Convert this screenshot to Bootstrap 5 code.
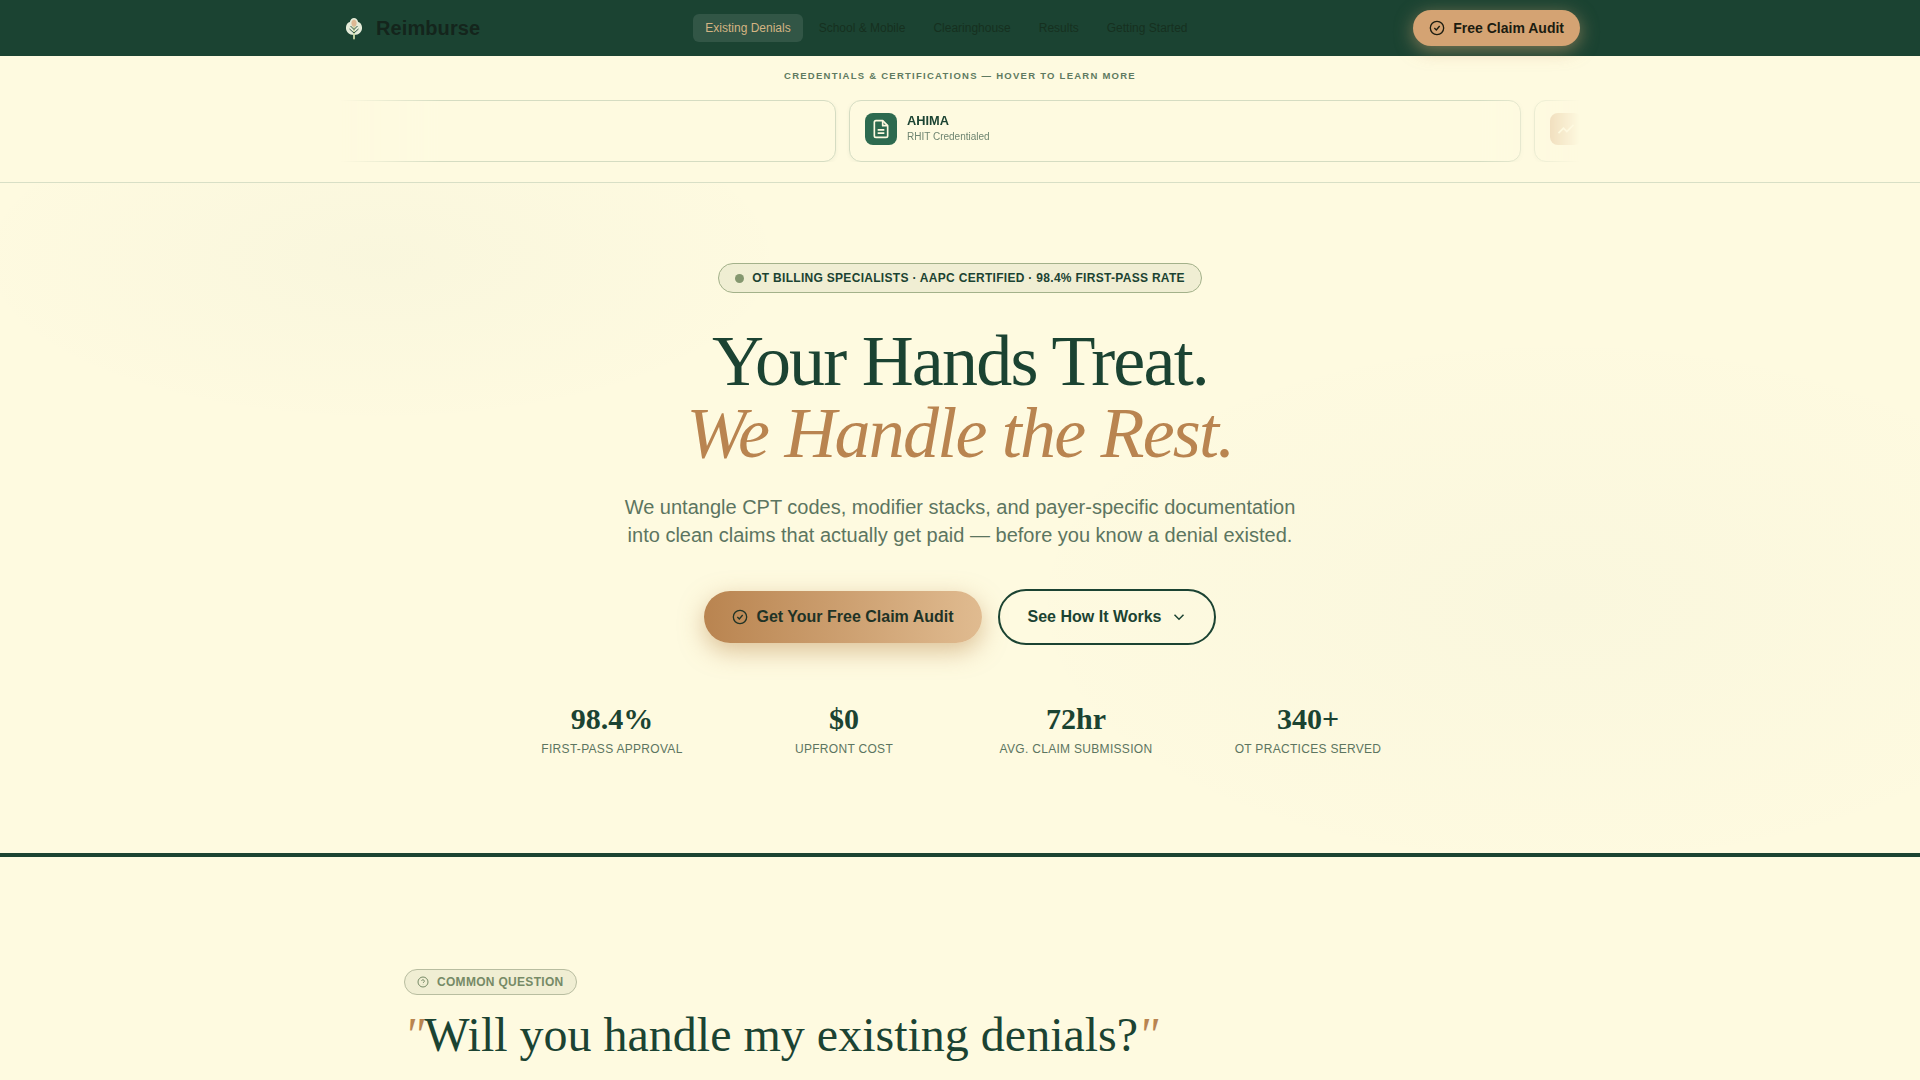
<!DOCTYPE html>
<html lang="en">
<head>
    <meta charset="UTF-8">
    <meta name="viewport" content="width=device-width, initial-scale=1.0">
    <title>Reimburse</title>
    <link href="https://cdn.jsdelivr.net/npm/bootstrap@5.3.0/dist/css/bootstrap.min.css" rel="stylesheet">
    <style>
        html, body { height: 1080px; overflow: hidden; }
        body { background: #fefae0; color: #1b4332; font-family: "Liberation Sans", Arial, sans-serif; }
        .serif { font-family: "Liberation Serif", "Times New Roman", serif; }

        /* nav */
        .top-bar { height: 56px; background: #1b4332; position: relative; z-index: 2; }
        .bar-inner { width: 1240px; margin: 0 auto; height: 100%; }
        .brand-name { color: #14251c; font-size: 20px; font-weight: 700; letter-spacing: .1px; margin-left: 10px; }
        .brand-mark { width: 24px; height: 24px; margin-left: 2px; }
        .nav-items { margin-left: 213px; gap: 4px; }
        .nav-item-link { font-size: 12px; padding: 6px 12px; height: 28px; line-height: 16px; border-radius: 6px; color: #16301f; text-decoration: none; }
        .nav-item-link.current { background: rgba(255,255,255,.1); color: #d4b483; }
        .audit-btn { height: 36px; padding: 0 16px; border-radius: 18px; background: #d4a373; color: #1c1c10; font-size: 14px; font-weight: 700; border: 0; gap: 8px; box-shadow: 0 4px 18px rgba(212,163,115,.55); }

        /* credentials */
        .cred-strip { height: 127px; border-bottom: 1px solid #d8dfc6; padding-top: 13px; }
        .cred-label { font-size: 9.5px; font-weight: 700; letter-spacing: 1.25px; color: #5f7a61; text-align: center; line-height: 14px; margin-bottom: 17px; }
        .cred-window { width: 1240px; margin: 0 auto; overflow: hidden; gap: 13px;
            -webkit-mask-image: linear-gradient(90deg, transparent 0, #000 100px, #000 1140px, transparent 100%);
            mask-image: linear-gradient(90deg, transparent 0, #000 100px, #000 1140px, transparent 100%); }
        .cred-item { flex: 0 0 auto; height: 62px; width: 672px; border: 1px solid #d5dcc2; border-radius: 12px; background: #fefae0; box-shadow: 0 1px 4px rgba(27,67,50,.06); padding: 12px 15px; gap: 10px; }
        .cred-item.first { margin-left: -176px; }
        .cred-icon { width: 32px; height: 32px; border-radius: 8px; background: #2d6a4f; flex-shrink: 0; }
        .cred-icon.tan { background: #d4a373; }
        .cred-title { font-size: 12.8px; font-weight: 700; line-height: 16px; color: #1b4332; }
        .cred-sub { font-size: 10px; line-height: 14px; color: #6f8571; margin-top: 1px; }

        /* hero */
        .hero-area { height: 674px; padding-top: 80px; border-bottom: 4px solid #1b4332;
            background:
                radial-gradient(ellipse 420px 170px at 380px 75px, rgba(82,121,111,.028), transparent),
                radial-gradient(ellipse 560px 280px at 1560px 420px, rgba(82,121,111,.022), transparent),
                #fefae0; }
        .hero-pill { height: 30px; padding: 0 16px; border: 1px solid #a3b18a; border-radius: 15px; background: rgba(163,177,138,.15); font-size: 12px; font-weight: 700; letter-spacing: .3px; color: #1b4332; gap: 8px; }
        .pill-dot { width: 9px; height: 9px; border-radius: 50%; background: #84976f; }
        .hero-title { font-size: 72px; line-height: 72px; font-weight: 400; letter-spacing: -1.8px; color: #1b4332; margin: 32px 0 0; }
        .hero-title em { color: #b98450; display: block; }
        .hero-lead { font-size: 20px; line-height: 28px; color: #5c7560; margin: 24px 0 0; }
        .hero-actions { margin-top: 40px; gap: 16px; }
        .btn-gold { height: 52px; padding: 0 28px; border-radius: 26px; border: 0; background: linear-gradient(90deg, #b98450, #e0bb90); color: #1f3326; font-size: 16px; font-weight: 700; gap: 8px; box-shadow: 0 8px 24px rgba(188,138,80,.5); }
        .btn-line { height: 56px; padding: 0 26px 0 28px; border-radius: 28px; border: 2px solid #1b4332; background: transparent; color: #1b4332; font-size: 16px; font-weight: 700; gap: 8px; }
        .stat-row { margin-top: 56px; width: 928px; }
        .stat-cell { width: 232px; text-align: center; }
        .stat-num { font-size: 30px; line-height: 36px; font-weight: 700; color: #1b4332; }
        .stat-cap { font-size: 12px; line-height: 16px; letter-spacing: .3px; color: #5c7560; margin-top: 4px; }

        /* question */
        .qa-wrap { width: 1112px; margin: 0 auto; padding-top: 112px; }
        .qa-pill { height: 26px; padding: 0 12px; border: 1px solid #b8bda0; border-radius: 13px; background: rgba(163,177,138,.15); font-size: 12px; font-weight: 700; letter-spacing: .3px; color: #768a66; gap: 8px; }
        .qa-title { font-size: 48px; line-height: 58px; font-weight: 400; color: #1b4332; margin: 11px 0 0; }
        .qa-title i { color: #b98450; }
    </style>
</head>
<body>

    <!-- Barra superior -->
    <nav class="top-bar">
        <div class="bar-inner d-flex align-items-center">
            <svg class="brand-mark" viewBox="0 0 24 24">
                <path d="M12 19C7 19 3.500 15.500 4 11c.3-3 2-4.500 3.800-5C8.500 3.500 10 2 12 2s3.500 1.500 4.200 4c1.800.5 3.500 2 3.800 5 .5 4.500-3 8-8 8z" fill="#e4ebd8"/>
                <path d="M12 11.500C10 10.500 9 8 9.500 6 10 4.500 11 3.500 12 3.500s2 1 2.500 2.500c.5 2-.5 4.500-2.500 5.500z" fill="#dcb894"/>
                <path d="M12 11v11.500" stroke="#cbd8a6" stroke-width="1.800" stroke-linecap="round"/>
                <path d="M12 17l-4.500-4M12 17l4.500-4M12 13.500L8.500 10M12 13.500L15.500 10" stroke="#1b4332" stroke-width=".9" fill="none"/>
            </svg>
            <span class="brand-name">Reimburse</span>
            <div class="nav-items d-flex">
                <a class="nav-item-link current" href="#">Existing Denials</a>
                <a class="nav-item-link" href="#">School &amp; Mobile</a>
                <a class="nav-item-link" href="#">Clearinghouse</a>
                <a class="nav-item-link" href="#">Results</a>
                <a class="nav-item-link" href="#">Getting Started</a>
            </div>
            <button class="audit-btn d-flex align-items-center ms-auto">
                <svg width="16" height="16" viewBox="0 0 24 24" fill="none" stroke="currentColor" stroke-width="2"><circle cx="12" cy="12" r="10"/><path d="M8 12l3 3 5-6"/></svg>
                Free Claim Audit
            </button>
        </div>
    </nav>

    <!-- Credenciais -->
    <section class="cred-strip">
        <div class="cred-label">CREDENTIALS &amp; CERTIFICATIONS — HOVER TO LEARN MORE</div>
        <div class="cred-window d-flex">
            <div class="cred-item first d-flex"></div>
            <div class="cred-item d-flex">
                <span class="cred-icon d-flex align-items-center justify-content-center">
                    <svg width="20" height="20" viewBox="0 0 24 24" fill="none" stroke="#fefae0" stroke-width="2" stroke-linejoin="round"><path d="M14 2H6a2 2 0 0 0-2 2v16a2 2 0 0 0 2 2h12a2 2 0 0 0 2-2V8z"/><path d="M14 2v6h6M8 13h8M8 17h8"/></svg>
                </span>
                <div>
                    <div class="cred-title">AHIMA</div>
                    <div class="cred-sub">RHIT Credentialed</div>
                </div>
            </div>
            <div class="cred-item d-flex">
                <span class="cred-icon tan d-flex align-items-center justify-content-center">
                    <svg width="20" height="20" viewBox="0 0 24 24" fill="none" stroke="#fefae0" stroke-width="2"><path d="M3 17l6-6 4 4 8-8"/></svg>
                </span>
            </div>
        </div>
    </section>

    <!-- Hero -->
    <section class="hero-area d-flex flex-column align-items-center text-center">
        <div class="hero-pill d-inline-flex align-items-center">
            <span class="pill-dot"></span>
            OT BILLING SPECIALISTS · AAPC CERTIFIED · 98.4% FIRST-PASS RATE
        </div>
        <h1 class="hero-title serif">Your Hands Treat.<em>We Handle the Rest.</em></h1>
        <p class="hero-lead">We untangle CPT codes, modifier stacks, and payer-specific documentation<br>into clean claims that actually get paid — before you know a denial existed.</p>
        <div class="hero-actions d-flex align-items-center">
            <button class="btn-gold d-flex align-items-center">
                <svg width="16" height="16" viewBox="0 0 24 24" fill="none" stroke="currentColor" stroke-width="2"><circle cx="12" cy="12" r="10"/><path d="M8 12l3 3 5-6"/></svg>
                Get Your Free Claim Audit
            </button>
            <button class="btn-line d-flex align-items-center">
                See How It Works
                <svg width="18" height="18" viewBox="0 0 24 24" fill="none" stroke="currentColor" stroke-width="2"><path d="M6 9l6 6 6-6"/></svg>
            </button>
        </div>
        <div class="stat-row d-flex">
            <div class="stat-cell"><div class="stat-num serif">98.4%</div><div class="stat-cap">FIRST-PASS APPROVAL</div></div>
            <div class="stat-cell"><div class="stat-num serif">$0</div><div class="stat-cap">UPFRONT COST</div></div>
            <div class="stat-cell"><div class="stat-num serif">72hr</div><div class="stat-cap">AVG. CLAIM SUBMISSION</div></div>
            <div class="stat-cell"><div class="stat-num serif">340+</div><div class="stat-cap">OT PRACTICES SERVED</div></div>
        </div>
    </section>

    <!-- Pergunta -->
    <section class="qa-wrap">
        <div class="qa-pill d-inline-flex align-items-center">
            <svg width="12" height="12" viewBox="0 0 24 24" fill="none" stroke="currentColor" stroke-width="2"><circle cx="12" cy="12" r="10"/><path d="M9 9.500a3 3 0 0 1 5.800 1c0 2-2.800 2-2.800 3.500M12 17.500v.5"/></svg>
            COMMON QUESTION
        </div>
        <h2 class="qa-title serif"><i>"</i>Will you handle my existing denials?<i>"</i></h2>
    </section>

</body>
</html>
